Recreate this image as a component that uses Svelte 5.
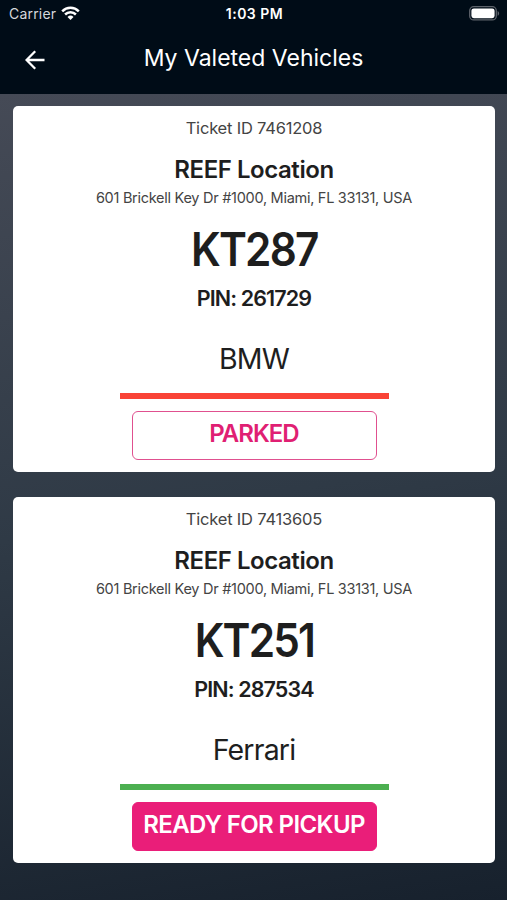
<!-- Valeted vehicles screen: status bar, title bar and one card per ticket. -->
<script>
  const vehicles = [
    {
      ticket: '7461208',
      location: 'REEF Location',
      address: '601 Brickell Key Dr #1000, Miami, FL 33131, USA',
      tag: 'KT287',
      pin: '261729',
      make: 'BMW',
      status: 'PARKED',
      ready: false,
    },
    {
      ticket: '7413605',
      location: 'REEF Location',
      address: '601 Brickell Key Dr #1000, Miami, FL 33131, USA',
      tag: 'KT251',
      pin: '287534',
      make: 'Ferrari',
      status: 'READY FOR PICKUP',
      ready: true,
    },
  ];
</script>

<div class="screen">
  <header>
    <div class="status-bar">
      <div class="carrier">
        <span>Carrier</span>
        <svg width="19" height="15" viewBox="0 0 19 15" aria-hidden="true">
          <g fill="none" stroke="#fff" stroke-width="2.5">
            <path d="M1.2 5.3a11.7 11.7 0 0 1 16.6 0" />
            <path d="M4.1 8.5a7.6 7.6 0 0 1 10.8 0" />
          </g>
          <path d="M9.5 14 6.5 11a4.3 4.3 0 0 1 6 0z" fill="#fff" />
        </svg>
      </div>
      <span class="time">1:03 PM</span>
      <svg class="battery" width="31" height="15" viewBox="0 0 31 15" aria-hidden="true">
        <rect x=".7" y=".7" width="26.6" height="13.2" rx="4" fill="none" stroke="#5d636b" stroke-width="1.3" />
        <rect x="2.4" y="2.4" width="23.2" height="9.8" rx="2.4" fill="#fff" />
        <path d="M28.6 5v4.8c2-.8 2-4 0-4.8z" fill="#5d636b" />
      </svg>
    </div>

    <div class="title-bar">
      <button class="back" aria-label="Back">
        <svg width="20" height="20" viewBox="0 0 20 20" aria-hidden="true">
          <path d="M19.5 10H1.8M10.2 1.2 1.5 10l8.7 8.8" fill="none" stroke="#fff" stroke-width="2.3" />
        </svg>
      </button>
      <h1>My Valeted Vehicles</h1>
    </div>
  </header>

  <main>
    {#each vehicles as v (v.ticket)}
      <article class="card" class:ready={v.ready}>
        <p class="ticket">Ticket ID {v.ticket}</p>
        <h2>{v.location}</h2>
        <p class="address">{v.address}</p>
        <p class="tag">{v.tag}</p>
        <p class="pin">PIN: {v.pin}</p>
        <p class="make">{v.make}</p>
        <div class="divider"></div>
        <button class="status">{v.status}</button>
      </article>
    {/each}
  </main>
</div>

<style>
  :global(body) {
    margin: 0;
  }

  .screen {
    display: flex;
    flex-direction: column;
    height: 900px;
    overflow: hidden;
    font-family: Inter, "Liberation Sans", sans-serif;
    color: #1e1e1e;
  }

  header {
    flex: none;
    height: 94px;
    background: #000c17;
    color: #fff;
  }

  .status-bar {
    display: grid;
    grid-template-columns: 1fr auto 1fr;
    align-items: center;
    height: 27px;
    padding: 0 7px 0 9px;
  }

  .carrier {
    display: flex;
    align-items: center;
    gap: 5px;
    font-size: 14px;
    color: #d5d8dc;
    letter-spacing: 0.2px;
  }

  .time {
    font-size: 14px;
    font-weight: 600;
    letter-spacing: 0.5px;
  }

  .battery {
    justify-self: end;
  }

  .title-bar {
    display: grid;
    grid-template-columns: 72px 1fr 72px;
    align-items: center;
    height: 62px;
  }

  .back {
    display: flex;
    margin: 3px 0 0 25px;
    padding: 0;
    border: 0;
    background: none;
  }

  h1 {
    margin: 0;
    font-size: 23px;
    font-weight: 400;
    text-align: center;
  }

  main {
    display: flex;
    flex: 1;
    flex-direction: column;
    gap: 25px;
    padding: 12px 12px 0 13px;
    background: linear-gradient(170deg, #454a56, #2f3a46 50%, #17212d);
  }

  .card {
    display: flex;
    flex-direction: column;
    align-items: center;
    box-sizing: border-box;
    height: 366px;
    padding-top: 10px;
    border-radius: 5px;
    background: #fff;
    white-space: nowrap;
  }

  .card p,
  .card h2 {
    margin: 0;
  }

  .card .ticket {
    font-size: 16.5px;
    line-height: 24px;
    letter-spacing: -0.2px;
    color: #444;
  }

  .card h2 {
    margin-top: 15px;
    font-size: 24px;
    font-weight: 600;
    line-height: 30px;
    letter-spacing: -0.45px;
  }

  .card .address {
    margin-top: 3px;
    font-size: 14.5px;
    line-height: 20px;
    letter-spacing: -0.28px;
    color: #444;
  }

  .card .tag {
    margin-top: 13px;
    font-size: 47px;
    font-weight: 600;
    line-height: 56px;
    letter-spacing: -2px;
    transform: scaleX(0.9);
  }

  .card .pin {
    margin-top: 7px;
    font-size: 21.5px;
    font-weight: 600;
    line-height: 28px;
    letter-spacing: -0.9px;
  }

  .card .make {
    margin-top: 29px;
    font-size: 28.5px;
    line-height: 36px;
    letter-spacing: -0.8px;
  }

  .divider {
    flex: none;
    width: 269px;
    height: 6px;
    margin-top: 16px;
    background: #f94336;
  }

  .status {
    flex: none;
    box-sizing: border-box;
    width: 245px;
    height: 49px;
    margin-top: 12px;
    padding: 0 0 4px;
    border: 1.5px solid #e0508f;
    border-radius: 6px;
    background: #fff;
    color: #e01f73;
    font-family: inherit;
    font-size: 24px;
    font-weight: 600;
    letter-spacing: -1px;
  }

  .ready .divider {
    background: #4caf50;
  }

  .ready .status {
    border-color: #ea1e79;
    background: #ea1e79;
    color: #fff;
    letter-spacing: -0.6px;
  }
</style>
